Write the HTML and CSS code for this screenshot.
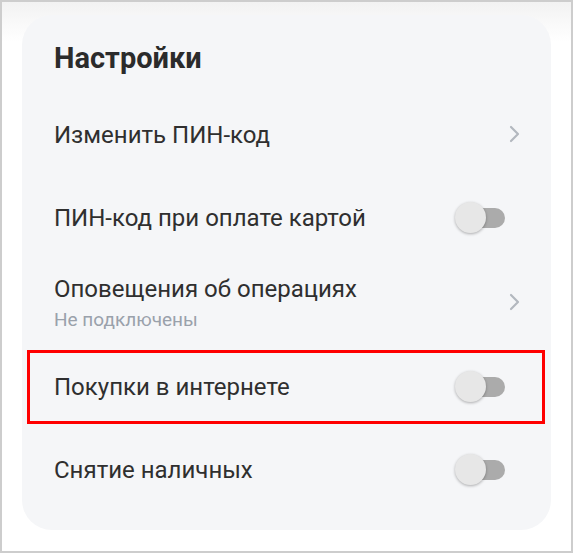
FILE: index.html
```html
<!DOCTYPE html>
<html lang="ru">
<head>
<meta charset="utf-8">
<link rel="stylesheet" href="styles.css">
</head>
<body>
<div class="frame">
  <div class="card">
    <h1 class="title">Настройки</h1>
    <div class="row">
      <span class="label">Изменить ПИН-код</span>
      <svg class="chev" width="12" height="18" viewBox="0 0 12 18"><path d="M2 2 L9 9 L2 16" fill="none" stroke="#b3b8bf" stroke-width="2.2" stroke-linecap="round" stroke-linejoin="round"/></svg>
    </div>
    <div class="row">
      <span class="label">ПИН-код при оплате картой</span>
      <span class="toggle"><span class="knob"></span></span>
    </div>
    <div class="row row-tall">
      <div class="stack">
        <span class="label">Оповещения об операциях</span>
        <span class="sub">Не подключены</span>
      </div>
      <svg class="chev" width="12" height="18" viewBox="0 0 12 18"><path d="M2 2 L9 9 L2 16" fill="none" stroke="#b3b8bf" stroke-width="2.2" stroke-linecap="round" stroke-linejoin="round"/></svg>
    </div>
    <div class="row highlighted">
      <span class="label">Покупки в интернете</span>
      <span class="toggle"><span class="knob"></span></span>
    </div>
    <div class="row">
      <span class="label">Снятие наличных</span>
      <span class="toggle"><span class="knob"></span></span>
    </div>
  </div>
</div>
</body>
</html>
```

FILE: styles.css
```css
* { box-sizing: border-box; }
html, body { margin: 0; padding: 0; background: #fff; }
body { font-family: Roboto, "Noto Sans", sans-serif; }
.frame {
  width: 573px;
  height: 553px;
  border: 2px solid #cdcdcd;
  padding: 13px 20px 0 20px;
  background: linear-gradient(to bottom, #f2f2f2 0px, #fff 40px);
}
.card {
  width: 529px;
  height: 515px;
  background: #f5f6f8;
  border-radius: 30px;
  padding: 0 32px;
  display: flex;
  flex-direction: column;
}
.title {
  margin: 0;
  padding-top: 25px;
  height: 78px;
  font-size: 29px;
  font-weight: 700;
  color: #2b2b2b;
  line-height: 36px;
}
.row {
  position: relative;
  height: 83px;
  display: flex;
  align-items: center;
  justify-content: space-between;
}
.row-tall { height: 86px; padding-top: 1px; }
.label {
  font-size: 24px;
  color: #2f2f2f;
  line-height: 28px;
}
.stack { display: flex; flex-direction: column; gap: 6px; }
.sub { font-size: 19px; color: #9aa1ab; line-height: 22px; }
.chev { margin-right: -2px; margin-top: -2px; }
.highlighted::after {
  content: "";
  position: absolute;
  left: -27px;
  right: -26px;
  top: 5px;
  bottom: 4px;
  border: 3px solid #ff0000;
}
.toggle {
  position: relative;
  width: 50px;
  height: 31px;
  margin-right: 14px;
}
.toggle::before {
  content: "";
  position: absolute;
  left: 12px;
  right: 0;
  top: 6px;
  height: 20px;
  border-radius: 10px;
  background: #ababab;
}
.knob {
  position: absolute;
  left: 0;
  top: 0;
  width: 31px;
  height: 31px;
  border-radius: 50%;
  background: #e7e7e7;
  box-shadow: 0 1px 3px rgba(0,0,0,0.3);
}
```
